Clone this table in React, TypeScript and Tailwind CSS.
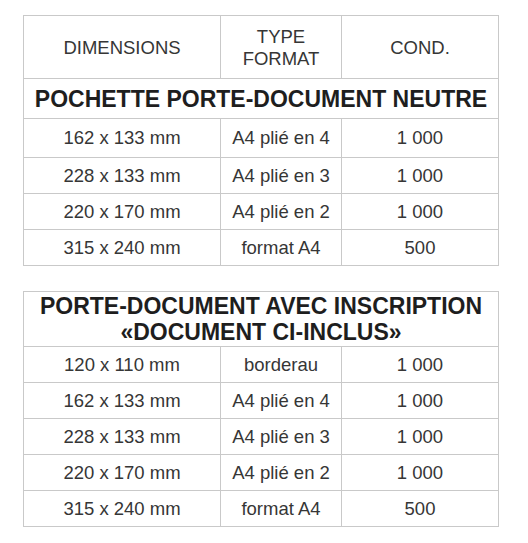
import React from "react";

const B = "border-[#c9c9c9]";

function Row({ cells, h, last }: { cells: string[]; h: string; last?: boolean }) {
  return (
    <div className={`grid grid-cols-[197px_121px_1fr] ${h} ${last ? "" : `border-b ${B}`}`}>
      {cells.map((c, i) => (
        <div
          key={i}
          className={`flex items-center justify-center text-[18.5px] leading-[22px] text-[#363636] ${i < 2 ? `border-r ${B}` : ""}`}
        >
          {c}
        </div>
      ))}
    </div>
  );
}

export default function App() {
  const t1 = [
    ["162 x 133 mm", "A4 plié en 4", "1 000"],
    ["228 x 133 mm", "A4 plié en 3", "1 000"],
    ["220 x 170 mm", "A4 plié en 2", "1 000"],
    ["315 x 240 mm", "format A4", "500"],
  ];
  const h1 = ["h-[39px]", "h-[36px]", "h-[36px]", "h-[35px]"];
  const t2 = [
    ["120 x 110 mm", "borderau", "1 000"],
    ["162 x 133 mm", "A4 plié en 4", "1 000"],
    ["228 x 133 mm", "A4 plié en 3", "1 000"],
    ["220 x 170 mm", "A4 plié en 2", "1 000"],
    ["315 x 240 mm", "format A4", "500"],
  ];
  return (
    <div
      className="w-[528px] h-[543px] bg-white pt-[15px] pl-[23px]"
      style={{ fontFamily: '"Liberation Sans", Arial, sans-serif' }}
    >
      <div className={`w-[476px] border ${B}`}>
        <div className={`grid grid-cols-[197px_121px_1fr] h-[63px] border-b ${B}`}>
          <div className={`flex items-center justify-center border-r ${B} text-[18.5px] text-[#363636] pt-[1px]`}>
            DIMENSIONS
          </div>
          <div className={`flex flex-col items-center justify-center border-r ${B} text-[18.5px] leading-[22px] text-[#363636] pt-[1px]`}>
            <span>TYPE</span>
            <span>FORMAT</span>
          </div>
          <div className="flex items-center justify-center text-[18.5px] text-[#363636] pt-[1px]">COND.</div>
        </div>
        <div className={`h-[40px] border-b ${B} flex items-center justify-center text-[23px] font-bold text-[#1e1e1e] pt-[1px]`}>
          POCHETTE PORTE-DOCUMENT NEUTRE
        </div>
        {t1.map((r, i) => (
          <Row key={i} cells={r} h={h1[i]} last={i === t1.length - 1} />
        ))}
      </div>

      <div className={`w-[476px] border ${B} mt-[25px]`}>
        <div className={`h-[55px] border-b ${B} flex flex-col items-center justify-center text-[23px] leading-[26px] font-bold text-[#1e1e1e]`}>
          <span>PORTE-DOCUMENT AVEC INSCRIPTION</span>
          <span>«DOCUMENT CI-INCLUS»</span>
        </div>
        {t2.map((r, i) => (
          <Row key={i} cells={r} h={i === t2.length - 1 ? "h-[35px]" : "h-[36px]"} last={i === t2.length - 1} />
        ))}
      </div>
    </div>
  );
}
